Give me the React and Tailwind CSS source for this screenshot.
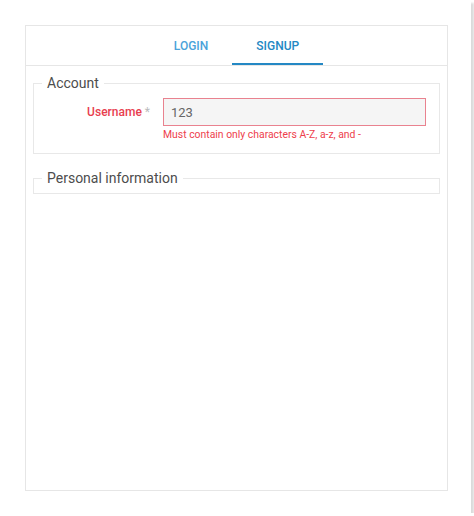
import React from "react";

const Tabs = () => (
  <div className="flex justify-center border-b border-[#e6e6e6] h-[40px]">
    <button className="px-6 h-full text-[12px] font-medium text-[#4aa3da]">
      LOGIN
    </button>
    <button className="px-6 h-full text-[12px] font-medium text-[#2488c4] border-b-2 border-[#2488c4] pt-[2px]">
      SIGNUP
    </button>
  </div>
);

const App = () => {
  return (
    <div
      className="w-[471px] h-[513px] bg-white shadow-[3px_3px_2px_rgba(0,0,0,0.14)] pt-[25px] pl-[25px]"
      style={{ fontFamily: "Roboto, 'Liberation Sans', sans-serif" }}
    >
      <div className="w-[423px] h-[466px] border border-[#e6e6e6] bg-white">
        <Tabs />
        <div className="px-[7px] pt-[7px]">
          <fieldset className="border border-[#e8e8e8] pl-0 pr-[13px] pb-[11px]">
            <legend className="ml-[8px] px-[5px] text-[14px] leading-[20px] text-[#4d4d4d]">
              Account
            </legend>
            <div className="flex pt-[5px]">
              <label className="w-[129px] pr-[13px] text-right text-[12px] font-medium leading-[28px] text-[#e8404f]">
                Username <span className="text-[#bbb] font-normal">*</span>
              </label>
              <div className="flex-1">
                <input
                  defaultValue="123"
                  readOnly
                  className="w-full h-[28px] border border-[#e9828f] bg-[#f5f5f5] px-[7px] text-[13px] text-[#666] outline-none"
                />
                <div className="mt-[2px] text-[10.4px] leading-[14px] text-[#ee3e4c]">
                  Must contain only characters A-Z, a-z, and -
                </div>
              </div>
            </div>
          </fieldset>
          <fieldset className="mt-[14px] border border-[#e8e8e8] pb-[5px]">
            <legend className="ml-[8px] px-[5px] text-[14px] leading-[20px] text-[#4d4d4d]">
              Personal information
            </legend>
          </fieldset>
        </div>
      </div>
    </div>
  );
};

export default App;
